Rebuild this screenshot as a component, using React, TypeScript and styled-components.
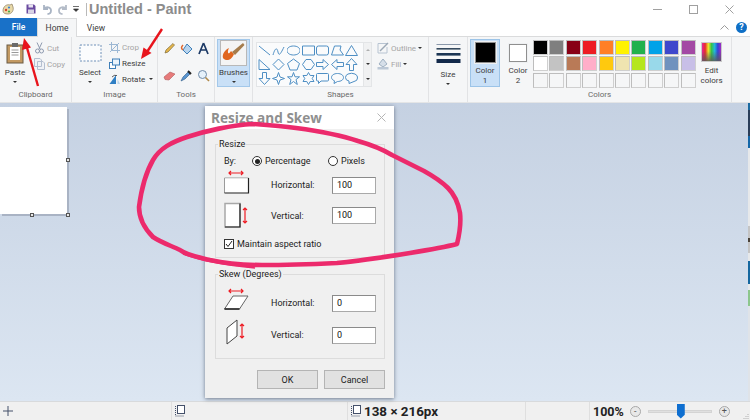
import React from 'react';
import styled, { createGlobalStyle } from 'styled-components';

const Global = createGlobalStyle`
  html, body { margin: 0; padding: 0; background: #fff; }
  body { font-family: Roboto, "Open Sans", sans-serif; }
  * { box-sizing: border-box; }
`;

const Page = styled.div`
  position: relative;
  width: 750px;
  height: 420px;
  overflow: hidden;
  display: flex;
  flex-direction: column;
  font-size: 8px;
  color: #3c3c3c;
`;

const TitleBar = styled.div`
  height: 18px;
  display: flex;
  align-items: center;
  padding-left: 2px;
  background: #fff;
`;

const QuickIcon = styled.svg`
  flex: none;
  margin-right: ${p => p.$gap ?? 4}px;
`;

const Divider = styled.div`
  width: 1px;
  height: 13px;
  background: #b9b9b9;
  margin-right: 2px;
`;

const AppTitle = styled.div`
  font-family: "Liberation Sans", Arial, sans-serif;
  font-size: 14.5px;
  line-height: 18px;
  font-weight: 700;
  color: #8c8c8c;
`;

const WindowControls = styled.div`
  margin-left: auto;
  display: flex;
  height: 18px;
  align-items: center;
  padding-right: 16px;
  gap: 27px;
`;

const TabBar = styled.div`
  height: 19px;
  display: flex;
  align-items: stretch;
  background: #fff;
  border-bottom: 1px solid #dadbdc;
  padding-right: 3px;
`;

const FileTab = styled.div`
  width: 37px;
  background: #1971c8;
  color: #fff;
  display: flex;
  align-items: center;
  justify-content: center;
  font-size: 8.5px;
  font-weight: 500;
`;

const Tab = styled.div`
  width: ${p => p.$w}px;
  display: flex;
  align-items: center;
  justify-content: center;
  font-size: 8.5px;
  margin-bottom: ${p => (p.$active ? -1 : 0)}px;
  background: ${p => (p.$active ? '#f5f6f7' : '#fff')};
  border: 1px solid ${p => (p.$active ? '#dadbdc' : 'transparent')};
  border-bottom: 0;
`;

const RibbonHelp = styled.div`
  margin-left: auto;
  display: flex;
  align-items: center;
  gap: 7px;
`;

const HelpDot = styled.div`
  width: 11px;
  height: 11px;
  border-radius: 50%;
  background: #0f6fc6;
  color: #fff;
  font-size: 9px;
  font-weight: 700;
  display: flex;
  align-items: center;
  justify-content: center;
`;

const Ribbon = styled.div`
  height: 66px;
  display: flex;
  background: #f5f6f7;
  border-bottom: 1px solid #e4e5e6;
`;

const Group = styled.div`
  width: ${p => p.$w}px;
  flex: none;
  display: flex;
  flex-direction: column;
  border-right: 1px solid #e2e3e5;
  padding-bottom: 1px;
`;

const GroupBody = styled.div`
  flex: 1;
  display: flex;
  padding: ${p => p.$pad ?? '3px 0 0 3px'};
  gap: ${p => p.$gap ?? 0}px;
`;

const GroupLabel = styled.div`
  height: 13px;
  line-height: 13px;
  text-align: center;
  color: #6a6a6a;
  font-size: 8px;
`;

const BigButton = styled.div`
  width: ${p => p.$w}px;
  display: flex;
  flex-direction: column;
  align-items: center;
  font-size: 8px;
  line-height: 10px;
  text-align: center;
  flex: none;
  padding-top: ${p => p.$top ?? 0}px;
  height: ${p => (p.$active ? '48px' : 'auto')};
  background: ${p => (p.$active ? '#c9e0f7' : 'transparent')};
  border: 1px solid ${p => (p.$active ? '#a3c8ea' : 'transparent')};
`;

const Caret = styled.span`
  width: 0;
  height: 0;
  margin-top: 3px;
  border: 2px solid transparent;
  border-top: 2.5px solid #333;
  border-bottom: 0;
  display: inline-block;
  flex: none;
`;

const SmallStack = styled.div`
  display: flex;
  flex-direction: column;
  gap: 2px;
  padding-top: ${p => p.$top ?? 3}px;
`;

const SmallAction = styled.div`
  height: 14px;
  display: flex;
  align-items: center;
  gap: ${p => p.$gap ?? 2}px;
  font-size: 8px;
  color: ${p => (p.$off ? '#a5a5a5' : '#3c3c3c')};
  white-space: nowrap;
`;

const ToolGrid = styled.div`
  display: grid;
  grid-template-columns: repeat(3, 13px);
  grid-auto-rows: 13px;
  gap: 14px 4px;
  padding: 5px 0 0 5px;
`;

const Gallery = styled.div`
  width: 116px;
  height: 45px;
  flex: none;
  display: flex;
  border: 1px solid #e3e5e7;
  background: #fafbfc;
`;

const GalleryGrid = styled.div`
  width: 106px;
  display: grid;
  grid-template-columns: repeat(7, 14.6px);
  grid-auto-rows: 14.3px;
  place-items: center;
`;

const GalleryScroll = styled.div`
  flex: 1;
  border-left: 1px solid #e3e5e7;
  background: #f0f1f2;
  display: flex;
  flex-direction: column;
  align-items: center;
  justify-content: space-around;
`;

const ColorButton = styled.div`
  width: ${p => p.$w}px;
  height: 48px;
  flex: none;
  display: flex;
  flex-direction: column;
  align-items: center;
  font-size: 8px;
  line-height: 10px;
  text-align: center;
  padding-top: ${p => p.$top}px;
  background: ${p => (p.$active ? '#c9e0f7' : 'transparent')};
  border: 1px solid ${p => (p.$active ? '#9cc4e8' : 'transparent')};
`;

const ColorWell = styled.div`
  width: ${p => p.$size}px;
  height: ${p => p.$size}px;
  background: ${p => p.$color};
  border: 1px solid #8f8f8f;
  box-shadow: 0 0 0 1px #eef0f2;
  margin-bottom: ${p => p.$mb}px;
`;

const Palette = styled.div`
  display: grid;
  grid-template-columns: repeat(10, 15px);
  grid-auto-rows: 15px;
  gap: 1.4px;
  margin: 1px 0 0 -3px;
`;

const Swatch = styled.div`
  background: ${p => p.$color ?? '#f5f6f7'};
  border: 1px solid #cfcfcf;
  border-top-color: #bdbdbd;
  border-left-color: #bdbdbd;
`;

const RainbowWell = styled.div`
  width: 21px;
  height: 21px;
  border: 1px solid #c9c9c9;
  margin-bottom: 2px;
  background:
    linear-gradient(to bottom, rgba(255, 255, 255, 0) 45%, rgba(90, 90, 90, 0.85) 100%),
    linear-gradient(to right, #e8249a, #e62c2c, #f1e52a, #35c24a, #22b8dc, #3344d4, #a32bc4);
`;

const Workspace = styled.div`
  flex: 1;
  position: relative;
  background: linear-gradient(to bottom, #c5d1e2, #dce6f2);
`;

const Sheet = styled.div`
  position: absolute;
  left: 0;
  top: 4px;
  width: 67px;
  height: 107px;
  background: #fff;
  box-shadow: 2px 2px 0 #a9b3c4;
`;

const Handle = styled.div`
  position: absolute;
  width: 4px;
  height: 4px;
  background: #e8e8e8;
  border: 1px solid #555;
  left: ${p => p.$x}px;
  top: ${p => p.$y}px;
`;

// the window behind Paint shows through along the right edge
const BehindWindow = styled.div`
  position: absolute;
  right: 0;
  top: 0;
  bottom: 0;
  width: 2px;
  background: linear-gradient(
    to bottom,
    #1a6aa0 0 7px,
    #2a3d58 7px 33px,
    #1467a8 33px 45px,
    #e6e8ea 45px 123px,
    #c4c4c4 123px 135px,
    #4a4238 135px 139px,
    #c4c4c4 139px 150px,
    #e6e8ea 150px 158px,
    #15679f 158px 181px,
    #e6e8ea 181px 187px,
    #8cc68c 187px 203px,
    #dfe3e8 203px
  );
`;

const Dialog = styled.div`
  position: absolute;
  left: 205px;
  top: 3px;
  width: 189px;
  height: 292px;
  background: #f0f0f0;
  box-shadow: 0 1px 4px rgba(40, 50, 70, 0.6);
  display: flex;
  flex-direction: column;
`;

const DialogHead = styled.div`
  height: 23px;
  flex: none;
  background: #fff;
  display: flex;
  align-items: center;
  justify-content: space-between;
  padding: 0 8px 0 6px;
`;

const DialogTitle = styled.div`
  font-family: "Open Sans", sans-serif;
  font-size: 13.6px;
  line-height: 18px;
  font-weight: 700;
  color: #8f8f8f;
`;

const DialogBody = styled.div`
  flex: 1;
  display: flex;
  flex-direction: column;
  padding: 10px 9px 0 10px;
`;

const Box = styled.fieldset`
  margin: 0;
  padding: 0 8px 0 8px;
  height: ${p => p.$h}px;
  margin-bottom: ${p => p.$mb}px;
  border: 1px solid #dcdcdc;
  min-width: 0;
`;

const BoxTitle = styled.legend`
  padding: 0 1px;
  margin-left: -6px;
  font-size: 9px;
  line-height: 10px;
  color: #222;
`;

const ByRow = styled.div`
  display: flex;
  align-items: center;
  height: 12px;
  margin-top: 6px;
  color: #222;
  font-size: 9px;
`;

const ByLabel = styled.span`
  width: 28px;
`;

const RadioItem = styled.span`
  display: flex;
  align-items: center;
  gap: 3px;
  width: ${p => p.$w}px;
`;

const Radio = styled.span`
  width: 10px;
  height: 10px;
  border-radius: 50%;
  border: 1px solid #333;
  background: #fff;
  display: flex;
  align-items: center;
  justify-content: center;
  &::after {
    content: '';
    width: 5px;
    height: 5px;
    border-radius: 50%;
    background: ${p => (p.$on ? '#222' : 'transparent')};
  }
`;

const FieldRow = styled.div`
  display: flex;
  align-items: center;
  height: ${p => p.$h}px;
  margin-top: ${p => p.$mt ?? 0}px;
  font-size: 9px;
  color: #222;
`;

const FieldIcon = styled.svg`
  flex: none;
  width: 26px;
  margin-right: 21px;
  overflow: visible;
`;

const FieldLabel = styled.span`
  flex: 1;
`;

const NumberBox = styled.div`
  width: 44px;
  height: 17px;
  background: #fff;
  border: 1px solid #a9a9a9;
  border-top-color: #8a8a8a;
  border-left-color: #8a8a8a;
  padding-left: 4px;
  line-height: 15px;
  font-size: 9px;
  color: #111;
`;

const CheckRow = styled.div`
  display: flex;
  align-items: center;
  gap: 3px;
  height: 11px;
  margin-top: 10px;
  font-size: 9px;
  color: #222;
`;

const CheckBox = styled.span`
  width: 10px;
  height: 10px;
  border: 1px solid #333;
  background: #fff;
  display: flex;
  align-items: center;
  justify-content: center;
`;

const DialogActions = styled.div`
  display: flex;
  justify-content: flex-end;
  gap: 6px;
  margin-top: 11px;
`;

const ActionButton = styled.div`
  width: 61px;
  height: 19px;
  background: #e1e1e1;
  border: 1px solid #b4b4b4;
  display: flex;
  align-items: center;
  justify-content: center;
  font-size: 9px;
  color: #222;
`;

const Overlay = styled.svg`
  position: absolute;
  left: 0;
  top: 0;
  pointer-events: none;
`;

const StatusBar = styled.div`
  height: 19px;
  flex: none;
  background: #f0f0f0;
  border-top: 1px solid #d8dadc;
  display: flex;
  align-items: stretch;
`;

const StatusCell = styled.div`
  width: ${p => p.$w}px;
  flex: none;
  display: flex;
  align-items: center;
  gap: 2px;
  padding-left: ${p => p.$pad ?? 3}px;
  border-right: ${p => (p.$line ? '1px solid #dfdfdf' : '0')};
`;

const StatusStrong = styled.span`
  font-size: ${p => p.$size ?? 13.4}px;
  font-weight: 700;
  color: #222;
  white-space: nowrap;
`;

const ZoomArea = styled.div`
  flex: 1;
  display: flex;
  align-items: center;
  padding-left: 3px;
  position: relative;
`;

const ZoomDot = styled.span`
  width: 11px;
  height: 11px;
  border-radius: 50%;
  border: 1px solid #a8a8a8;
  background: #e8e8e8;
  color: #555;
  font-size: 9px;
  line-height: 8px;
  text-align: center;
  flex: none;
  margin-left: ${p => p.$ml ?? 0}px;
`;

const ZoomTrack = styled.div`
  position: relative;
  width: 64px;
  height: 3px;
  margin: 0 7px;
  background: #e0e0e0;
  border: 1px solid #d4d4d4;
  flex: none;
`;

const ZoomThumb = styled.div`
  position: absolute;
  left: 28px;
  top: -7px;
  width: 8px;
  height: 15px;
  background: #0f6fd0;
  clip-path: polygon(0 0, 100% 0, 100% 75%, 50% 100%, 0 75%);
`;

const Grip = styled.svg`
  position: absolute;
  right: 1px;
  bottom: 1px;
`;

const SHAPES: string[] = [
  'M1 2 L12 11',
  'M1 11 C3 4 5 3 6 8 S9 9 12 3',
  'M6.5 2 C10.5 2 13 4 13 6.5 S10.5 11 6.5 11 S0 9 0 6.5 S2.5 2 6.5 2 Z',
  'M0.5 2 H12.5 V11 H0.5 Z',
  'M2.5 2 H10.5 Q12.5 2 12.5 4 V9 Q12.5 11 10.5 11 H2.5 Q0.5 11 0.5 9 V4 Q0.5 2 2.5 2 Z',
  'M3.5 2 H10 L9 6 L12.5 11 H0.5 Z',
  'M6.5 1.5 L12.5 11.5 H0.5 Z',
  'M1 1.5 L12 11.5 H1 Z',
  'M6.5 1 L12 6.5 L6.5 12 L1 6.5 Z',
  'M6.5 1 L12.5 5.5 L10 12 H3 L0.5 5.5 Z',
  'M4 1.5 H9 L12.5 6.5 L9 11.5 H4 L0.5 6.5 Z',
  'M0.5 4.5 H7 V1.5 L12.5 6.5 L7 11.5 V8.5 H0.5 Z',
  'M12.5 4.5 H6 V1.5 L0.5 6.5 L6 11.5 V8.5 H12.5 Z',
  'M4.5 12.5 V6.5 H1 L6.5 0.5 L12 6.5 H8.5 V12.5 Z',
  'M4.5 0.5 V6.5 H1 L6.5 12.5 L12 6.5 H8.5 V0.5 Z',
  'M6.5 0.5 L8 5 L12.5 6.5 L8 8 L6.5 12.5 L5 8 L0.5 6.5 L5 5 Z',
  'M6.5 0.5 L8 4.8 H12.5 L9 7.6 L10.3 12.5 L6.5 9.5 L2.7 12.5 L4 7.6 L0.5 4.8 H5 Z',
  'M6.5 0.5 L8.2 3.5 H12 L10.2 6.5 L12 9.5 H8.2 L6.5 12.5 L4.8 9.5 H1 L2.8 6.5 L1 3.5 H4.8 Z',
  'M1.5 1.5 H11.5 Q12.5 1.5 12.5 2.5 V8 Q12.5 9 11.5 9 H5 L2.5 11.5 V9 H1.5 Q0.5 9 0.5 8 V2.5 Q0.5 1.5 1.5 1.5 Z',
  'M6.5 1.5 C10 1.5 12.5 3.2 12.5 5.5 S10 9.5 6.5 9.5 L3 11.5 L3.5 8.8 C1.5 8 0.5 6.8 0.5 5.5 C0.5 3.2 3 1.5 6.5 1.5 Z',
  'M3 2 Q6.5 0.5 10 2 Q13 3.5 12.5 6 Q12.5 9 9 9.5 L4 11.5 L4 9 Q0.5 8.5 0.5 5.5 Q0.5 3 3 2 Z',
];

const ROW_ONE = ['#000000', '#7f7f7f', '#880015', '#ed1c24', '#ff7f27', '#fff200', '#22b14c', '#00a2e8', '#3f48cc', '#a349a4'];
const ROW_TWO = ['#ffffff', '#c3c3c3', '#b97a57', '#ffaec9', '#ffc90e', '#efe4b0', '#b5e61d', '#99d9ea', '#7092be', '#c8bfe7'];

const INK =
  'M253 124 C232 125 205 131 187 137 C172 142 160 148 153 160 C146 172 141 192 139 207 C139 220 145 229 153 237 C162 243 172 246 180 250 C186 255 198 257 210 260 C228 264 245 265 262 265 C290 265 315 264 337 263 C360 261 385 257 410 253 C428 250 445 247 457 244 C460 232 461 222 460 213 C458 202 455 195 448 188 C440 180 433 176 424 171 C412 165 402 160 392 155 C382 149 372 145 358 141 C340 135 318 131 296 128 C282 126 268 125 253 124 Z';

const HArrow = ({ x, y, w }: { x: number; y: number; w: number }) => (
  <path d={`M${x + 2} ${y - 2} L${x} ${y} L${x + 2} ${y + 2} M${x} ${y} H${x + w} M${x + w - 2} ${y - 2} L${x + w} ${y} L${x + w - 2} ${y + 2}`} stroke="#ee1c24" fill="none" strokeWidth="1.2" />
);

const VArrow = ({ x, y, h }: { x: number; y: number; h: number }) => (
  <path d={`M${x - 2} ${y + 2} L${x} ${y} L${x + 2} ${y + 2} M${x} ${y} V${y + h} M${x - 2} ${y + h - 2} L${x} ${y + h} L${x + 2} ${y + h - 2}`} stroke="#ee1c24" fill="none" strokeWidth="1.2" />
);

const App: React.FC = () => (
  <Page>
    <Global />
    <TitleBar>
      <QuickIcon width="13" height="13" viewBox="0 0 13 13" $gap={11}>
        <path d="M1 8 C1 3 5 1 8 2 L10 1 L11 4 C12 7 10 11 6 11 C3 11 1 10 1 8 Z" fill="#e8d9a8" stroke="#8a7a5a" strokeWidth="0.7" />
        <circle cx="4" cy="7" r="1.2" fill="#d9432c" />
        <circle cx="7" cy="4.5" r="1.1" fill="#3a7fd0" />
        <circle cx="7" cy="8.5" r="1.1" fill="#4aa84a" />
      </QuickIcon>
      <QuickIcon width="10" height="10" viewBox="0 0 10 10" $gap={6}>
        <path d="M0.5 0.5 H8 L9.5 2 V9.5 H0.5 Z" fill="#6a4aa0" />
        <rect x="2.5" y="0.5" width="4.5" height="3" fill="#e8e4f0" />
        <rect x="2" y="5.5" width="6" height="4" fill="#d8d4e4" />
      </QuickIcon>
      <QuickIcon width="10" height="11" viewBox="0 0 10 11" $gap={6}>
        <path d="M2 1 V5 H6 M2 5 C4 2 9 3 9 6.5 C9 8.5 7.5 10 5.5 10" stroke="#a9b4c4" strokeWidth="1.8" fill="none" />
      </QuickIcon>
      <QuickIcon width="10" height="11" viewBox="0 0 10 11" $gap={5}>
        <path d="M8 1 V5 H4 M8 5 C6 2 1 3 1 6.5 C1 8.5 2.5 10 4.5 10" stroke="#b4bcc8" strokeWidth="1.8" fill="none" />
      </QuickIcon>
      <QuickIcon width="6" height="6" viewBox="0 0 6 6" $gap={7}>
        <path d="M0 0.5 H6 M0.5 3 H5.5 L3 5.5 Z" stroke="#333" strokeWidth="0.7" fill="#333" />
      </QuickIcon>
      <Divider />
      <AppTitle>Untitled - Paint</AppTitle>
      <WindowControls>
        <svg width="9" height="9" viewBox="0 0 9 9"><path d="M0 4.5 H9" stroke="#a0a0a0" /></svg>
        <svg width="9" height="9" viewBox="0 0 9 9"><rect x="0.5" y="0.5" width="8" height="8" fill="none" stroke="#a0a0a0" /></svg>
        <svg width="9" height="9" viewBox="0 0 9 9"><path d="M0.5 0.5 L8.5 8.5 M8.5 0.5 L0.5 8.5" stroke="#a0a0a0" /></svg>
      </WindowControls>
    </TitleBar>
    <TabBar>
      <FileTab>File</FileTab>
      <Tab $w={40} $active>Home</Tab>
      <Tab $w={38}>View</Tab>
      <RibbonHelp>
        <svg width="9" height="5" viewBox="0 0 9 5"><path d="M0.5 4.5 L4.5 0.5 L8.5 4.5" stroke="#9a9a9a" fill="none" /></svg>
        <HelpDot>?</HelpDot>
      </RibbonHelp>
    </TabBar>
    <Ribbon>
      <Group $w={72}>
        <GroupBody $pad="4px 0 0 4px" $gap={8}>
          <BigButton $w={22}>
            <svg width="19" height="22" viewBox="0 0 19 22">
              <rect x="1" y="3" width="16" height="18" fill="#c39a63" stroke="#6b5a45" />
              <rect x="4" y="5" width="10" height="13" fill="#fff" />
              <path d="M5.5 8 H12.5 M5.5 10.5 H12.5 M5.5 13 H12.5" stroke="#9a9a9a" />
              <rect x="6" y="1" width="6" height="4" fill="#6a6a6a" />
            </svg>
            <span style={{ marginTop: 4 }}>Paste</span>
            <Caret />
          </BigButton>
          <SmallStack $top={0}>
            <SmallAction $off>
              <svg width="11" height="12" viewBox="0 0 11 12"><path d="M3 0.5 L6 7 M8 0.5 L5 7" stroke="#8e9ab0" fill="none" /><circle cx="3.5" cy="9" r="2" fill="none" stroke="#8e9ab0" /><circle cx="7.5" cy="9" r="2" fill="none" stroke="#8e9ab0" /></svg>
              Cut
            </SmallAction>
            <SmallAction $off>
              <svg width="11" height="12" viewBox="0 0 11 12"><path d="M0.5 0.5 H6 L7.5 2 V8.5 H0.5 Z M3.5 3.5 H9 L10.5 5 V11.5 H3.5 Z" fill="#f0f2f6" stroke="#b4bfd0" /></svg>
              Copy
            </SmallAction>
          </SmallStack>
        </GroupBody>
        <GroupLabel>Clipboard</GroupLabel>
      </Group>
      <Group $w={86}>
        <GroupBody $pad="3px 0 0 6px" $gap={7}>
          <BigButton $w={24}>
            <svg width="23" height="19" viewBox="0 0 23 19" style={{ marginTop: 3 }}><rect x="1" y="1" width="21" height="16" fill="#fbfcfd" stroke="#6f90b8" strokeDasharray="2 1.5" /></svg>
            <span style={{ marginTop: 5 }}>Select</span>
            <Caret />
          </BigButton>
          <SmallStack $top={0}>
            <SmallAction $off>
              <svg width="11" height="11" viewBox="0 0 11 11"><path d="M2.5 0 V8.5 H11 M0 2.5 H8.5 V11 M1 10 L10 1" stroke="#9db8d4" fill="none" /></svg>
              Crop
            </SmallAction>
            <SmallAction>
              <svg width="11" height="11" viewBox="0 0 11 11"><rect x="0.5" y="4.5" width="6" height="6" fill="#fff" stroke="#3f7fb8" /><rect x="3.5" y="1" width="7" height="6" fill="#eaf3fb" stroke="#3f7fb8" /></svg>
              Resize
            </SmallAction>
            <SmallAction>
              <svg width="11" height="11" viewBox="0 0 11 11"><path d="M7 1 L7 10 H0.5 Z" fill="#2f7fc4" /><path d="M8.5 10 V5 L11 10 Z" fill="#bcd6ec" /><path d="M3 3 Q5 0.5 8 1.5" stroke="#333" fill="none" strokeWidth="0.8" /></svg>
              Rotate
              <Caret style={{ marginTop: 0, marginLeft: 2 }} />
            </SmallAction>
          </SmallStack>
        </GroupBody>
        <GroupLabel>Image</GroupLabel>
      </Group>
      <Group $w={57}>
        <GroupBody $pad="0">
          <ToolGrid>
            <svg width="13" height="13" viewBox="0 0 13 13"><path d="M2 11 L3 8 L10 1.5 L11.5 3 L5 10 Z" fill="#e6b64a" stroke="#7d6a3a" strokeWidth="0.7" /></svg>
            <svg width="13" height="13" viewBox="0 0 13 13"><path d="M7 2 L12 7 L7 12 L3 8 Z" fill="#b7d4ee" stroke="#3f7fb8" /><path d="M3 8 Q0 6 3 3" stroke="#e0662c" strokeWidth="1.5" fill="none" /></svg>
            <svg width="13" height="13" viewBox="0 0 13 13"><path d="M6.5 1 L2 12 M6.5 1 L11 12 M4 8 H9" stroke="#1d3a66" strokeWidth="1.7" fill="none" /></svg>
            <svg width="13" height="13" viewBox="0 0 13 13"><path d="M1 8 L7 3 L12 5 L6 11 L2 10.5 Z" fill="#e77b7b" stroke="#b05a5a" strokeWidth="0.6" /></svg>
            <svg width="13" height="13" viewBox="0 0 13 13"><path d="M1 12 L3 8 L8 3 L10 5 L5 10 Z" fill="#5a95d0" stroke="#2d5a88" strokeWidth="0.6" /><path d="M8 2 L11 5" stroke="#222" strokeWidth="2" /></svg>
            <svg width="13" height="13" viewBox="0 0 13 13"><circle cx="5.5" cy="5.5" r="4" fill="#e6f1fa" stroke="#6f8aa8" /><path d="M8.5 8.5 L12 12" stroke="#b08a4a" strokeWidth="1.6" /></svg>
          </ToolGrid>
        </GroupBody>
        <GroupLabel>Tools</GroupLabel>
      </Group>
      <Group $w={38}>
        <GroupBody $pad="2px 0 0 2px">
          <BigButton $w={33} $active>
            <svg width="27" height="26" viewBox="0 0 27 26">
              <rect x="0.5" y="0.5" width="26" height="25" fill="#f4f4f4" stroke="#b8b8b8" />
              <path d="M3 18 C6 22 12 20 14 14 L11 11 C8 16 7 12 9 8 C5 10 2 14 3 18 Z" fill="#e0661f" />
              <path d="M12 12 L23 3 L24.5 5 L15 15 Z" fill="#a57c4c" />
            </svg>
            <span style={{ marginTop: 2 }}>Brushes</span>
            <Caret />
          </BigButton>
        </GroupBody>
      </Group>
      <Group $w={176}>
        <GroupBody $pad="5px 0 0 3px" $gap={5}>
          <Gallery>
            <GalleryGrid>
              {SHAPES.map(d => (
                <svg key={d} width="13" height="13" viewBox="0 0 13 13">
                  <path d={d} fill="none" stroke="#4f8fc4" strokeWidth="1" />
                </svg>
              ))}
            </GalleryGrid>
            <GalleryScroll>
              <Caret style={{ transform: 'rotate(180deg)', opacity: 0.35, margin: 0 }} />
              <Caret style={{ margin: 0 }} />
              <Caret style={{ margin: 0 }} />
            </GalleryScroll>
          </Gallery>
          <SmallStack $top={0}>
            <SmallAction $off style={{ marginTop: -1 }}>
              <svg width="12" height="12" viewBox="0 0 12 12"><path d="M1 1.5 H10 M1 1.5 V11 H10 V5" stroke="#b8c4d2" fill="none" /><path d="M3 9 L11 1" stroke="#9ca8b6" strokeWidth="1.4" /></svg>
              Outline
              <Caret style={{ marginTop: 0 }} />
            </SmallAction>
            <SmallAction $off>
              <svg width="12" height="12" viewBox="0 0 12 12"><path d="M6 1 L10 6 L6 9 L2 6 Z" fill="#d6dfe9" stroke="#9fb0c2" /><rect x="0.5" y="9" width="11" height="2.5" fill="#bcc8d6" /></svg>
              Fill
              <Caret style={{ marginTop: 0 }} />
            </SmallAction>
          </SmallStack>
        </GroupBody>
        <GroupLabel>Shapes</GroupLabel>
      </Group>
      <Group $w={39}>
        <GroupBody $pad="5px 0 0 0">
          <BigButton $w={38}>
            <svg width="25" height="22" viewBox="0 0 25 22">
              <rect x="0.5" y="1" width="24" height="1" fill="#8a98aa" />
              <rect x="0.5" y="5" width="24" height="1.6" fill="#34495e" />
              <rect x="0.5" y="10" width="24" height="2.6" fill="#1b3554" />
              <rect x="0.5" y="16" width="24" height="4" fill="#12294a" />
            </svg>
            <span style={{ marginTop: 5 }}>Size</span>
            <Caret />
          </BigButton>
        </GroupBody>
      </Group>
      <Group $w={264}>
        <GroupBody $pad="2px 0 0 2px" $gap={3}>
          <ColorButton $w={30} $active $top={2}>
            <ColorWell $size={21} $color="#000" $mb={3} />
            Color<br />1
          </ColorButton>
          <ColorButton $w={30} $top={4}>
            <ColorWell $size={18} $color="#fff" $mb={4} />
            Color<br />2
          </ColorButton>
          <Palette>
            {[...ROW_ONE, ...ROW_TWO].map((c, i) => <Swatch key={i} $color={c} />)}
            {ROW_ONE.map((c, i) => <Swatch key={c + i} />)}
          </Palette>
          <ColorButton $w={26} $top={2}>
            <RainbowWell />
            <span style={{ marginTop: 2 }}>Edit colors</span>
          </ColorButton>
        </GroupBody>
        <GroupLabel>Colors</GroupLabel>
      </Group>
    </Ribbon>
    <Workspace>
      <Sheet>
        <Handle $x={66} $y={51} />
        <Handle $x={30} $y={106} />
        <Handle $x={66} $y={106} />
      </Sheet>
      <BehindWindow />
      <Dialog>
        <DialogHead>
          <DialogTitle>Resize and Skew</DialogTitle>
          <svg width="9" height="9" viewBox="0 0 9 9"><path d="M0.5 0.5 L8.5 8.5 M8.5 0.5 L0.5 8.5" stroke="#b5b5b5" /></svg>
        </DialogHead>
        <DialogBody>
          <Box $h={119} $mb={11}>
            <BoxTitle>Resize</BoxTitle>
            <ByRow>
              <ByLabel>By:</ByLabel>
              <RadioItem $w={76}><Radio $on />Percentage</RadioItem>
              <RadioItem $w={40}><Radio />Pixels</RadioItem>
            </ByRow>
            <FieldRow $h={20} $mt={8}>
              <FieldIcon height="20" viewBox="0 0 26 20">
                <HArrow x={5} y={-2} w={14} />
                <path d="M0.5 18 V3 H24.5" fill="#fff" stroke="#9a9a9a" />
                <rect x="1" y="3.5" width="23" height="14" fill="#fff" />
                <path d="M0.5 18 H24.5 V3" fill="none" stroke="#222" strokeWidth="1.2" />
              </FieldIcon>
              <FieldLabel>Horizontal:</FieldLabel>
              <NumberBox>100</NumberBox>
            </FieldRow>
            <FieldRow $h={25} $mt={8}>
              <FieldIcon height="25" viewBox="0 0 26 25">
                <rect x="1" y="0.5" width="15" height="23.5" fill="#fff" stroke="#a8a8a8" strokeWidth="1.5" />
                <path d="M1 24 H16 V0.5" fill="none" stroke="#222" strokeWidth="1.2" />
                <VArrow x={21} y={5} h={15} />
              </FieldIcon>
              <FieldLabel>Vertical:</FieldLabel>
              <NumberBox>100</NumberBox>
            </FieldRow>
            <CheckRow>
              <CheckBox>
                <svg width="8" height="8" viewBox="0 0 8 8"><path d="M1 4 L3 6.5 L7 1" stroke="#222" fill="none" /></svg>
              </CheckBox>
              Maintain aspect ratio
            </CheckRow>
          </Box>
          <Box $h={90} $mb={0}>
            <BoxTitle>Skew (Degrees)</BoxTitle>
            <FieldRow $h={20} $mt={14}>
              <FieldIcon height="20" viewBox="0 0 26 20">
                <HArrow x={5} y={-2} w={14} />
                <path d="M0.5 16 L9 3 H24 L15.5 16 Z" fill="#fff" stroke="#666" />
                <path d="M0.5 16 H15.5" stroke="#222" strokeWidth="1.5" />
              </FieldIcon>
              <FieldLabel>Horizontal:</FieldLabel>
              <NumberBox>0</NumberBox>
            </FieldRow>
            <FieldRow $h={24} $mt={10}>
              <FieldIcon height="24" viewBox="0 0 26 24">
                <path d="M3 21 V5 L13 -3 V13 Z" fill="#fff" stroke="#444" />
                <VArrow x={18} y={1} h={14} />
              </FieldIcon>
              <FieldLabel>Vertical:</FieldLabel>
              <NumberBox>0</NumberBox>
            </FieldRow>
          </Box>
          <DialogActions>
            <ActionButton>OK</ActionButton>
            <ActionButton>Cancel</ActionButton>
          </DialogActions>
        </DialogBody>
      </Dialog>
    </Workspace>
    <StatusBar>
      <StatusCell $w={172} $line>
        <svg width="10" height="10" viewBox="0 0 10 10"><path d="M5 0 V10 M0 5 H10" stroke="#44506a" /></svg>
      </StatusCell>
      <StatusCell $w={176} $line>
        <svg width="11" height="12" viewBox="0 0 11 12"><rect x="2.5" y="0.5" width="7" height="8" fill="#fff" stroke="#44506a" /><path d="M0.5 1 V11 H9" stroke="#44506a" fill="none" strokeDasharray="1 1" /></svg>
      </StatusCell>
      <StatusCell $w={178} $line>
        <svg width="11" height="12" viewBox="0 0 11 12"><rect x="2.5" y="0.5" width="7" height="8" fill="#fff" stroke="#44506a" /><path d="M0.5 1 V11 H9" stroke="#44506a" fill="none" strokeDasharray="1 1" /></svg>
        <StatusStrong>138 × 216px</StatusStrong>
      </StatusCell>
      <StatusCell $w={64} $line />
      <ZoomArea>
        <StatusStrong $size={12.5}>100%</StatusStrong>
        <ZoomDot $ml={6}>-</ZoomDot>
        <ZoomTrack><ZoomThumb /></ZoomTrack>
        <ZoomDot>+</ZoomDot>
        <Grip width="6" height="6" viewBox="0 0 6 6"><path d="M5 1 V2 M3 3 V4 M5 3 V4 M1 5 V6 M3 5 V6 M5 5 V6" stroke="#b0b0b0" /></Grip>
      </ZoomArea>
    </StatusBar>
    <Overlay width="750" height="420" viewBox="0 0 750 420">
      <path d={INK} fill="none" stroke="#ec2a6c" strokeWidth="4.6" strokeLinejoin="round" />
      <path d="M183 254 C205 262 235 266 255 268 L216 261 Z" fill="#ec2a6c" stroke="#ec2a6c" strokeWidth="1.5" />
      <path d="M38 86 L26.5 46" stroke="#e8141c" strokeWidth="2.4" />
      <path d="M24 38 L22 50 L31 47.5 Z" fill="#e8141c" />
      <path d="M162 29 L147 52" stroke="#e8141c" strokeWidth="2.4" />
      <path d="M141 59 L143.5 47.5 L151.5 53 Z" fill="#e8141c" />
    </Overlay>
  </Page>
);

export default App;
